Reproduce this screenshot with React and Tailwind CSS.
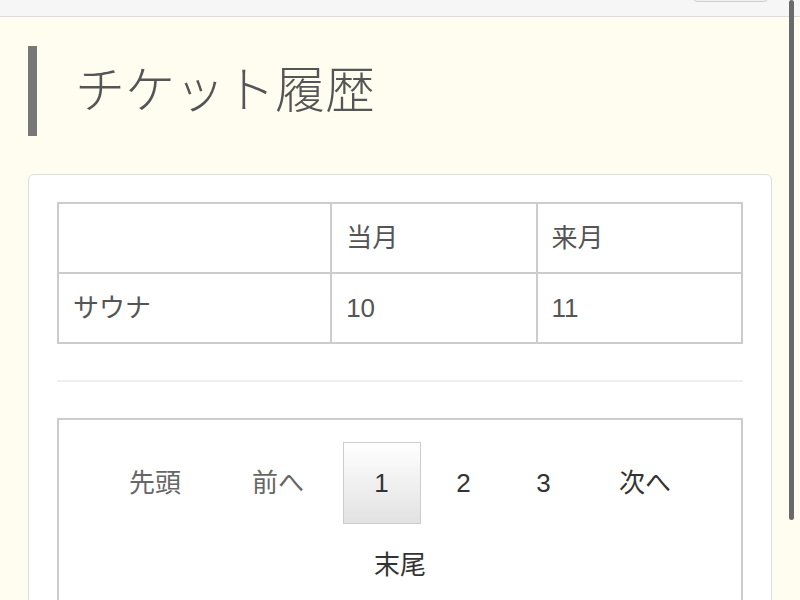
export default function App() {
  const font = { fontFamily: '"Liberation Sans", "Noto Sans CJK JP", sans-serif' };
  const itemBase = "flex items-center justify-center h-[82px] text-[26px]";
  return (
    <div className="relative h-[600px] w-[800px] overflow-hidden bg-[#fffcf0]" style={font}>
      <div className="flex h-[17px] items-end justify-end overflow-hidden border-b border-[#dcdcdc] bg-[#f6f6f6]">
        <div className="mb-[14px] mr-[32px] h-[30px] w-[75px] shrink-0 rounded-[4px] border border-[#cfcfcf] bg-[#f0f0f0]" />
      </div>

      <div className="px-[28px]">
        <div className="mt-[29px] flex h-[90px] items-center border-l-[9px] border-[#777777] pl-[38px]">
          <h1 className="text-[50px] font-light leading-none text-[#555555]">チケット履歴</h1>
        </div>

        <div className="mt-[38px] rounded-[6px] border border-[#dddddd] bg-white px-[28px] pt-[27px] pb-[40px]">
          <table className="w-[686px] border-collapse text-[26px] text-[#555555]">
            <tbody>
              <tr className="h-[70px]">
                <td className="w-[274px] border-2 border-[#cccccc] pl-[14px]"></td>
                <td className="w-[206px] border-2 border-[#cccccc] pl-[14px]">当月</td>
                <td className="w-[206px] border-2 border-[#cccccc] pl-[14px]">来月</td>
              </tr>
              <tr className="h-[70px]">
                <td className="border-2 border-[#cccccc] pl-[14px]">サウナ</td>
                <td className="border-2 border-[#cccccc] pl-[14px]">10</td>
                <td className="border-2 border-[#cccccc] pl-[14px]">11</td>
              </tr>
            </tbody>
          </table>

          <div className="mt-[36px] h-[2px] w-[686px] bg-[#eeeeee]" />

          <div className="mt-[36px] w-[686px] border-2 border-[#cccccc] px-[4px] pt-[22px] pb-[30px]">
            <div className="flex flex-wrap justify-center gap-x-[6px]">
              <div className={`${itemBase} w-[117px] text-[#666666]`}>先頭</div>
              <div className={`${itemBase} w-[117px] text-[#666666]`}>前へ</div>
              <div className={`${itemBase} w-[78px] border border-[#cccccc] bg-gradient-to-b from-white to-[#e2e2e2] text-[#333333]`}>1</div>
              <div className={`${itemBase} w-[74px] text-[#333333]`}>2</div>
              <div className={`${itemBase} w-[74px] text-[#333333]`}>3</div>
              <div className={`${itemBase} w-[117px] text-[#333333]`}>次へ</div>
              <div className={`${itemBase} w-[117px] text-[#333333]`}>末尾</div>
            </div>
          </div>
        </div>
      </div>

      <div className="absolute right-[6px] top-0 h-[520px] w-[5px] rounded-full bg-[#6a6a6a]" />
    </div>
  );
}
